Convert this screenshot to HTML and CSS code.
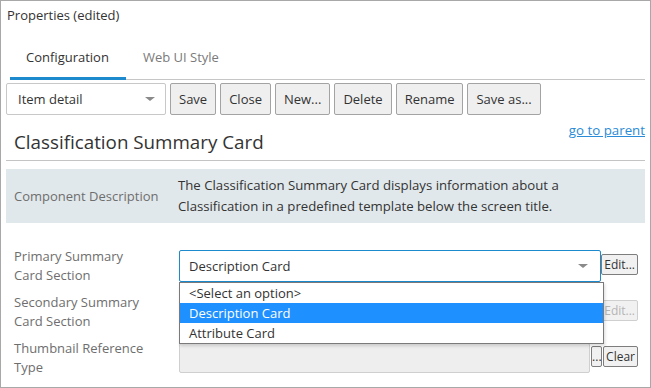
FILE: index.html
```html
<!DOCTYPE html>
<html>
<head>
<meta charset="utf-8">
<link rel="stylesheet" href="styles.css">
</head>
<body>
<div class="panel">
  <div class="title">Properties (edited)</div>
  <div class="tabs">
    <div class="tab active">Configuration</div>
    <div class="tab">Web UI Style</div>
  </div>
  <div class="toolbar">
    <div class="select toolbar-select"><span>Item detail</span><span class="caret"></span></div>
    <button class="btn">Save</button>
    <button class="btn">Close</button>
    <button class="btn">New...</button>
    <button class="btn">Delete</button>
    <button class="btn">Rename</button>
    <button class="btn">Save as...</button>
  </div>
  <div class="head">
    <h1 class="heading">Classification Summary Card</h1>
    <a class="parent-link" href="#">go to parent</a>
  </div>
  <div class="desc">
    <div class="desc-label">Component Description</div>
    <div class="desc-text">The Classification Summary Card displays information about a Classification in a predefined template below the screen title.</div>
  </div>
  <div class="form">
    <div class="row">
      <div class="label">Primary Summary<br>Card Section</div>
      <div class="control">
        <div class="field-wrap">
          <div class="select field focused"><span>Description Card</span><span class="caret"></span></div>
          <ul class="dropdown">
            <li>&lt;Select an option&gt;</li>
            <li class="selected">Description Card</li>
            <li>Attribute Card</li>
          </ul>
        </div>
        <button class="mini">Edit...</button>
      </div>
    </div>
    <div class="row">
      <div class="label">Secondary Summary<br>Card Section</div>
      <div class="control">
        <div class="field-wrap">
          <div class="select field"><span></span><span class="caret"></span></div>
        </div>
        <button class="mini" disabled>Edit...</button>
      </div>
    </div>
    <div class="row">
      <div class="label">Thumbnail Reference<br>Type</div>
      <div class="control">
        <div class="input"></div>
        <button class="mini dots">...</button>
        <button class="mini">Clear</button>
      </div>
    </div>
  </div>
</div>
</body>
</html>
```
FILE: styles.css
```css
* { box-sizing: border-box; }
html, body { margin: 0; padding: 0; background: #fff; }
body { font-family: "Open Sans", "Noto Sans", sans-serif; color: #333; }

.panel {
  width: 651px;
  height: 388px;
  border: 1px solid #a8a8a8;
  overflow: hidden;
}

.title {
  height: 35px;
  padding: 5px 6px 0;
  font-size: 13px;
  line-height: 18px;
  color: #333;
}

.tabs {
  display: flex;
  margin: 0 5px 0 9px;
  border-bottom: 1px solid #c6c6c6;
  height: 44px;
}
.tab {
  height: 44px;
  margin-bottom: -1px;
  padding: 0 16px;
  display: flex;
  align-items: center;
  border-bottom: 3px solid transparent;
  font-size: 13px;
  color: #7a7a7a;
  padding-top: 1px;
}
.tab.active {
  color: #333;
  border-bottom-color: #1d8ace;
  padding-right: 17px;
}
.tab + .tab { padding-left: 17px; }

.toolbar {
  display: flex;
  gap: 4px;
  margin: 3px 0 0 5px;
  height: 32px;
}
.select {
  display: flex;
  align-items: center;
  justify-content: space-between;
  border: 1px solid #c8c8c8;
  border-radius: 2px;
  background: #fff;
  font-size: 13px;
  color: #333;
}
.toolbar-select {
  width: 160px;
  height: 32px;
  padding: 0 10px 0 11px;
}
.caret {
  width: 0;
  height: 0;
  border-left: 5px solid transparent;
  border-right: 5px solid transparent;
  border-top: 4px solid #8a8a8a;
}
.btn {
  height: 32px;
  padding: 0 8px;
  border: 1px solid #a3a3a3;
  border-radius: 2px;
  background: #efefef;
  font-family: inherit;
  font-size: 13px;
  color: #333;
}

.head {
  display: flex;
  justify-content: space-between;
  align-items: flex-start;
  margin: 6px 5px 0;
  height: 40px;
  border-bottom: 1px solid #c4c4c4;
}
.heading {
  margin: 9px 0 0;
  padding-left: 8px;
  font-size: 18.8px;
  line-height: 24px;
  font-weight: normal;
  color: #333;
}
.parent-link {
  font-size: 13.3px;
  line-height: 18px;
  color: #2a8bd6;
  text-decoration: underline;
}

.desc {
  display: flex;
  align-items: center;
  margin: 8px 5px 0;
  height: 54px;
  background: #e1e8eb;
}
.desc-label {
  width: 172px;
  padding-left: 8px;
  font-size: 13px;
  color: #6e6e6e;
}
.desc-text {
  max-width: 410px;
  font-size: 13.2px;
  line-height: 21px;
  color: #333;
}

.form {
  display: flex;
  flex-direction: column;
  gap: 8px;
  margin-top: 24px;
  padding-left: 13px;
}
.row {
  display: flex;
  align-items: center;
  height: 38px;
}
.label {
  width: 165px;
  font-size: 13px;
  line-height: 19px;
  color: #6e6e6e;
}
.control {
  display: flex;
  align-items: center;
  width: 459px;
}
.field-wrap {
  position: relative;
  width: 424px;
}
.field {
  height: 32px;
  padding: 0 12px 0 9px;
}
.field.focused { border-color: #1d8ace; }
.dropdown {
  position: absolute;
  top: 100%;
  left: 0;
  z-index: 2;
  width: 425px;
  height: 62px;
  margin: 0;
  padding: 0;
  list-style: none;
  background: #fff;
  border: 1px solid #7a7a7a;
  box-shadow: 1px 2px 3px rgba(0,0,0,0.15);
  font-size: 13px;
}
.dropdown li {
  height: 20px;
  line-height: 20px;
  padding-left: 9px;
  color: #333;
}
.dropdown li.selected {
  background: #1e90ff;
  color: #fff;
}
.mini {
  height: 21px;
  margin-top: -4px;
  padding: 0 2px;
  border: 1px solid #7d7d7d;
  border-radius: 2px;
  background: #f1f1f1;
  font-family: inherit;
  font-size: 12px;
  line-height: 17px;
  color: #333;
}
.mini:disabled {
  color: #b5b5b5;
  border-color: #cfcfcf;
}
.input {
  width: 412px;
  height: 30px;
  margin-right: 1px;
  border: 1px solid #cfcfcf;
  border-radius: 2px;
  background: #eeeeee;
}
.dots {
  width: 11px;
  padding: 0;
  margin-right: 1px;
}
```
